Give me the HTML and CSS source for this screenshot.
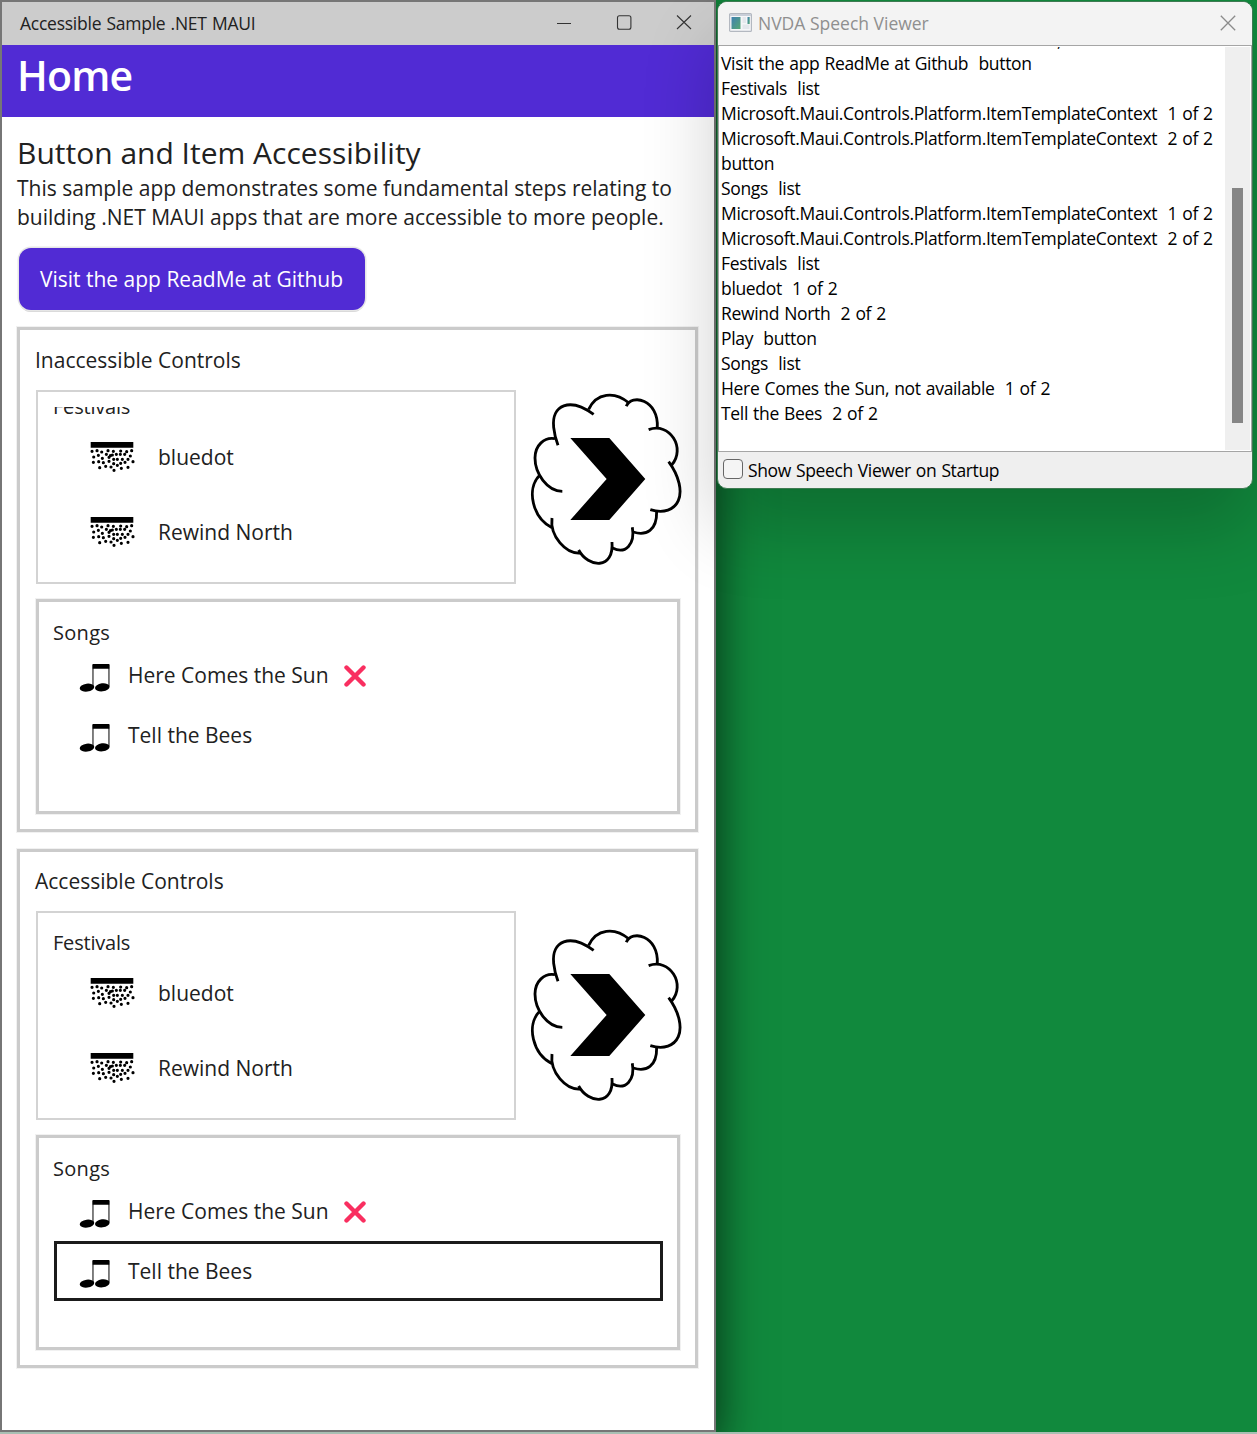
FILE: index.html
```html
<!DOCTYPE html>
<html lang="en">
<head>
<meta charset="utf-8">
<title>Accessible Sample .NET MAUI</title>
<link rel="stylesheet" href="styles.css">
</head>
<body>
<svg class="symbols" aria-hidden="true">
  <defs>
    <symbol id="cloud" viewBox="31 30 460 530">
      <g fill="none" stroke="#000" stroke-width="8.500">
        <path d="M222 103C150 50 95 75 102 142Q105 170 115 196"/>
        <path d="M207 88C230 38 285 32 328 69"/>
        <path d="M320 79C335 40 418 58 413 143"/>
        <path d="M387 149C450 125 500 205 456 255"/>
        <path d="M447 245C480 290 488 335 476 362S433 402 392 389"/>
        <path d="M411 396C412 450 380 469 341 456"/>
        <path d="M338 442C347 492 318 524 279 504"/>
        <path d="M277 486C284 570 206 564 177 510"/>
        <path d="M181 519C140 522 90 470 97 414"/>
        <path d="M97 443C40 415 18 328 60 286"/>
        <path d="M128 334C82 333 46 280 46 234C46 196 74 170 106 176"/>
      </g>
      <path d="M152 174H269L377 297L269 420H152L261 297Z"/>
    </symbol>
    <symbol id="stage" viewBox="60 36 138 94">
      <path d="M62 36H190V53H62Z"/>
      <path fill="none" stroke="#000" stroke-width="9.5" stroke-linecap="round" d="M66 64h.1M81 62h.1M95 66h.1M114 62h.1M130 64h.1M152 63h.1M170 65h.1M185 62h.1M71 81h.1M85 76h.1M109 73h.1M121 77h.1M117 82h.1M127 75h.1M139 73h.1M151 73h.1M164 73h.1M181 78h.1M97 85h.1M131 88h.1M142 88h.1M157 88h.1M174 88h.1M70 97h.1M86 95h.1M100 98h.1M117 94h.1M131 101h.1M152 100h.1M165 97h.1M189 95h.1M89 113h.1M107 109h.1M123 111h.1M142 106h.1M154 115h.1M174 112h.1M132 121h.1"/>
    </symbol>
    <symbol id="note" viewBox="148 220 94 90">
      <path d="M189 223H239V237H189Z"/>
      <path d="M190 225V293M238 225V290" stroke="#000" stroke-width="3"/>
      <ellipse cx="172" cy="294" rx="22" ry="12" transform="rotate(-7 172 294)"/>
      <ellipse cx="218" cy="293" rx="22" ry="12" transform="rotate(-7 218 293)"/>
    </symbol>
    <symbol id="cross" viewBox="0 0 22 22">
      <path d="M2.500 2.500L19.500 19.500M19.500 2.500L2.500 19.500" fill="none" stroke="#f92f60" stroke-width="4.4" stroke-linecap="round"/>
    </symbol>
  </defs>
</svg>

<main class="window app">
  <div class="titlebar">
    <span class="titlebar-text">Accessible Sample .NET MAUI</span>
    <svg class="caption-buttons" viewBox="0 0 136 16" fill="none" stroke="#333" stroke-width="1.1">
      <path d="M1 8.500H15M121 .5L135 14M135 .5L121 14"/>
      <rect x="61.500" y=".8" width="13.400" height="13.400" rx="2"/>
    </svg>
  </div>
  <header class="page-header">Home</header>
  <div class="page">
    <h1>Button and Item Accessibility</h1>
    <p class="intro">This sample app demonstrates some fundamental steps relating to<br>building .NET MAUI apps that are more accessible to more people.</p>
    <button class="readme">Visit the app ReadMe at Github</button>

    <section class="frame">
      <h2>Inaccessible Controls</h2>
      <div class="row">
        <div class="festivals festivals-scrolled">
          <div class="viewport">
            <h3>Festivals</h3>
            <div class="festival"><svg><use href="#stage"/></svg>bluedot</div>
            <div class="festival"><svg><use href="#stage"/></svg>Rewind North</div>
          </div>
        </div>
        <svg class="play"><use href="#cloud"/></svg>
      </div>
      <div class="songs">
        <h3>Songs</h3>
        <div class="song"><svg class="note"><use href="#note"/></svg>Here Comes the Sun<svg class="cross"><use href="#cross"/></svg></div>
        <div class="song"><svg class="note"><use href="#note"/></svg>Tell the Bees</div>
      </div>
    </section>

    <section class="frame frame-accessible">
      <h2>Accessible Controls</h2>
      <div class="row">
        <div class="festivals">
          <div class="viewport">
            <h3>Festivals</h3>
            <div class="festival"><svg><use href="#stage"/></svg>bluedot</div>
            <div class="festival"><svg><use href="#stage"/></svg>Rewind North</div>
          </div>
        </div>
        <svg class="play"><use href="#cloud"/></svg>
      </div>
      <div class="songs">
        <h3>Songs</h3>
        <div class="song"><svg class="note"><use href="#note"/></svg>Here Comes the Sun<svg class="cross"><use href="#cross"/></svg></div>
        <div class="song focused"><svg class="note"><use href="#note"/></svg>Tell the Bees</div>
      </div>
    </section>
  </div>
</main>

<aside class="window viewer">
  <div class="viewer-title">
    <svg class="viewer-icon" viewBox="0 0 23 19">
      <defs><linearGradient id="pane" x2="1" y2="1"><stop stop-color="#3f7fb0"/><stop offset="1" stop-color="#55a873"/></linearGradient></defs>
      <rect x=".6" y=".6" width="21.8" height="17.8" rx="1" fill="#f5f6f8" stroke="#b3b8c0" stroke-width="1.2"/>
      <path d="M1 2H22" stroke="#c8ced8" stroke-width="2"/>
      <rect x="2.5" y="4" width="9" height="12" fill="url(#pane)"/>
      <path d="M13.5 4H17V10H13.5ZM13.5 11.500H20.500V16H13.500Z" fill="#e4e7ec"/>
      <rect x="18.500" y="4" width="2.200" height="7" fill="url(#pane)"/>
    </svg>
    <span>NVDA Speech Viewer</span>
    <svg class="viewer-close" viewBox="0 0 16 16"><path d="M.8 .8L15.200 15.200M15.200 .8L.8 15.200" fill="none" stroke="#8b8b8b" stroke-width="1.300"/></svg>
  </div>
  <div class="log">
    <div class="lines">
      <div class="line line-cut">,</div>
      <div class="line">Visit the app ReadMe at Github  button</div>
      <div class="line">Festivals  list</div>
      <div class="line">Microsoft.Maui.Controls.Platform.ItemTemplateContext  1 of 2</div>
      <div class="line">Microsoft.Maui.Controls.Platform.ItemTemplateContext  2 of 2</div>
      <div class="line">button</div>
      <div class="line">Songs  list</div>
      <div class="line">Microsoft.Maui.Controls.Platform.ItemTemplateContext  1 of 2</div>
      <div class="line">Microsoft.Maui.Controls.Platform.ItemTemplateContext  2 of 2</div>
      <div class="line">Festivals  list</div>
      <div class="line">bluedot  1 of 2</div>
      <div class="line">Rewind North  2 of 2</div>
      <div class="line">Play  button</div>
      <div class="line">Songs  list</div>
      <div class="line">Here Comes the Sun, not available  1 of 2</div>
      <div class="line">Tell the Bees  2 of 2</div>
    </div>
    <div class="scrollbar"><div class="thumb"></div></div>
  </div>
  <label class="startup"><span class="checkbox"></span>Show Speech Viewer on Startup</label>
</aside>
</body>
</html>
```
FILE: styles.css
```css
* { box-sizing: border-box; }

body {
  margin: 0;
  height: 1434px;
  overflow: hidden;
  position: relative;
  background: #11893d;
  border-bottom: 2px solid #a8bfb3;
  font-family: "Open Sans", "Noto Sans", sans-serif;
  color: #212121;
}

h1, h2, h3, p { margin: 0; font-weight: 400; }
svg { display: block; flex: none; }
.symbols { position: absolute; width: 0; height: 0; }
.window { position: absolute; }

/* Application window */
.app {
  left: 0;
  top: 0;
  width: 716px;
  height: 1432px;
  border: 2px solid #767676;
  background: #fff;
  box-shadow: 0 16px 44px rgba(0, 0, 0, .7);
  clip-path: inset(0 -80px 0 0);
}

.titlebar {
  height: 43px;
  padding: 0 22px 0 18px;
  display: flex;
  align-items: center;
  justify-content: space-between;
  background: #ccc;
}
.titlebar-text { margin-bottom: 2px; font-size: 17.500px; letter-spacing: -.25px; word-spacing: .9px; }
.caption-buttons { width: 136px; height: 16px; margin-bottom: 1px; }

.page-header {
  height: 72px;
  padding-left: 15px;
  background: #512bd4;
  color: #fff;
  font-size: 41px;
  font-weight: 600;
  letter-spacing: -.8px;
  line-height: 60px;
}

.page {
  padding: 17px 16px 0 15px;
  display: flex;
  flex-direction: column;
  font-size: 21px;
  line-height: 29px;
}
h1 { font-size: 30px; line-height: 38px; margin-bottom: 2px; }
h2 { font-size: 21px; line-height: 29px; }
h3 { font-size: 20px; line-height: 29px; }

.readme {
  align-self: flex-start;
  margin: 16px 0 17px 2px;
  width: 346px;
  height: 62px;
  padding: 0 7px 0 6px;
  border: 0;
  border-radius: 12px;
  background: #512bd4;
  box-shadow: 0 0 0 1.500px #e6e6e6, 0 2px 0 #cfcfcf;
  color: #fff;
  font: inherit;
}

.frame {
  height: 505px;
  margin-bottom: 17px;
  padding: 16px 15px 15px 16px;
  border: 3px solid #cbcbcb;
  outline: 1px solid #f1f1f1;
  display: flex;
  flex-direction: column;
}
.frame h2 { height: 44px; flex: none; margin-left: -1px; }
.frame-accessible { height: 519px; padding-top: 15px; }

.row { display: flex; gap: 14px; }
.festivals {
  flex: none;
  width: 480px;
  height: 209px;
  padding: 15px;
  border: 2px solid #d3d3d3;
}
.festivals h3 { letter-spacing: -.2px; }
.viewport { height: 100%; overflow: hidden; }
.viewport h3 { height: 28px; }
.festivals-scrolled { height: 194px; }
.festivals-scrolled h3 { margin-top: -15px; }

.festival { height: 75px; display: flex; align-items: center; padding-left: 37px; gap: 22px; }
.festival svg { width: 46px; height: 31.300px; }
.play { width: 153.300px; height: 176.700px; }
.frame-accessible .play { margin-top: 15px; }

.songs {
  height: 215px;
  margin-top: 15px;
  padding: 16px 14px 16px 15px;
  border: 3px solid #cbcbcb;
  outline: 1px solid #f1f1f1;
}
.songs h3 { height: 27px; margin-left: -1px; letter-spacing: .3px; }
.song { height: 60px; display: flex; align-items: center; padding: 0 26px 0 25px; }
.focused { border: 3px solid #1b1b1b; padding: 0 23px 0 22px; }
.note { width: 31.300px; height: 30px; margin: 6px 17.700px 0 0; }
.cross { width: 22px; height: 22px; margin: 1px 0 0 15.500px; }

/* Speech viewer window */
.viewer {
  left: 717px;
  top: 1px;
  width: 536px;
  height: 488px;
  border: 1.500px solid #3d7a51;
  border-radius: 10px;
  overflow: hidden;
  display: flex;
  flex-direction: column;
  background: #efefef;
  box-shadow: 0 38px 76px rgba(0, 0, 0, .2);
  color: #000;
  font-size: 17.500px;
}

.viewer-title {
  height: 43px;
  padding: 0 16px 2px 11px;
  display: flex;
  align-items: center;
  gap: 6px;
  background: #f3f3f3;
  color: #8f8f8f;
}
.viewer-icon { width: 23px; height: 19px; }
.viewer-close { width: 16px; height: 16px; margin-left: auto; }

.log {
  height: 407px;
  padding: 1px;
  border: 1px solid #a5a5a5;
  display: flex;
  background: #fff;
}
.lines { flex: 1; overflow: hidden; padding-left: 1px; }
.line { height: 25px; line-height: 25px; white-space: pre; letter-spacing: -.33px; word-spacing: .9px; }
.line-cut { height: 23px; margin-top: -19px; padding-left: 336px; }
.scrollbar { width: 25px; padding: 141px 7px 0; background: #efefef; }
.thumb { height: 235px; background: #868686; }

.startup { height: 35px; padding-left: 5px; display: flex; align-items: center; gap: 5px; letter-spacing: -.38px; word-spacing: .9px; }
.checkbox { width: 20px; height: 20px; margin-bottom: 1px; border: 1px solid #666; border-radius: 4px; background: #f5f5f5; }
```
